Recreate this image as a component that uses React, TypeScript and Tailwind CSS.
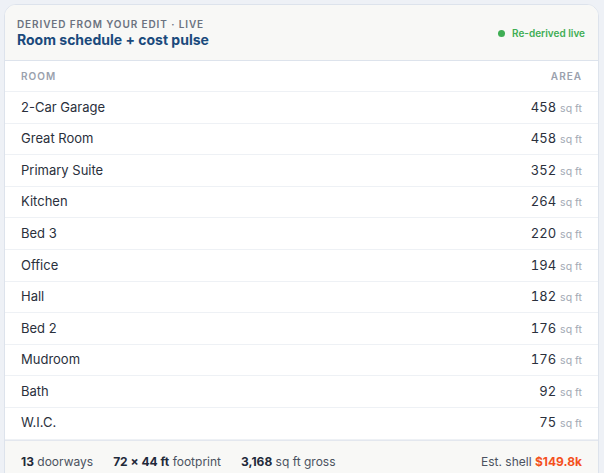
import React from 'react'

interface Room {
  name: string;
  area: number;
}

const rooms: Room[] = [
  { name: "2-Car Garage", area: 458 },
  { name: "Great Room", area: 458 },
  { name: "Primary Suite", area: 352 },
  { name: "Kitchen", area: 264 },
  { name: "Bed 3", area: 220 },
  { name: "Office", area: 194 },
  { name: "Hall", area: 182 },
  { name: "Bed 2", area: 176 },
  { name: "Mudroom", area: 176 },
  { name: "Bath", area: 92 },
  { name: "W.I.C.", area: 75 },
];

const App = () => {
  return (
    <div className="h-[473px] overflow-hidden bg-[#eef1f6] pl-1 pr-[5px] pt-1 font-['Inter',sans-serif]">
      <div className="overflow-hidden rounded-t-xl border border-[#dde3ec] bg-white">
        {/* header */}
        <div className="flex h-[56px] items-center justify-between border-b border-[#dde3ec] bg-[#f8f8f6] px-3">
          <div className="flex flex-col pt-[1px]">
            <span className="text-[10px] font-semibold uppercase leading-[14px] tracking-[0.09em] text-[#6b7280]">
              Derived from your edit · Live
            </span>
            <span className="-mt-[1px] text-[14px] font-bold leading-5 text-[#1a4a7c]">
              Room schedule + cost pulse
            </span>
          </div>
          <div className="mr-[1px] flex items-center gap-[7px] pt-[1px]">
            <span className="h-[7px] w-[7px] rounded-full bg-[#3fae54]" />
            <span className="text-[10px] font-semibold text-[#3fae54]">Re-derived live</span>
          </div>
        </div>

        {/* table */}
        <div className="flex h-[31px] items-center justify-between border-b border-[#eef1f5] px-4 text-[10px] font-semibold uppercase tracking-[0.1em] text-[#9aa1ad]">
          <span>Room</span>
          <span>Area</span>
        </div>
        {rooms.map((room) => (
          <div
            key={room.name}
            className="flex h-[31.6px] items-center justify-between border-b border-[#eef1f5] px-4 last:border-b-0"
          >
            <span className="text-[13px] text-[#2a303c]">{room.name}</span>
            <span className="flex items-baseline gap-[4px]">
              <span className="text-[13px] tabular-nums text-[#2a303c]">{room.area}</span>
              <span className="text-[10.5px] text-[#a3a9b4]">sq ft</span>
            </span>
          </div>
        ))}

        {/* footer */}
        <div className="flex h-[46px] items-start justify-between border-t border-[#e3e7ee] bg-[#f8f8f6] px-4 pt-[13px] text-[12px] leading-4 text-[#4b5260]">
          <div className="flex items-center gap-5">
            <span>
              <b className="font-bold text-[#1f2a3a]">13</b> doorways
            </span>
            <span>
              <b className="font-bold text-[#1f2a3a]">72 × 44 ft</b> footprint
            </span>
            <span>
              <b className="font-bold text-[#1f2a3a]">3,168</b> sq ft gross
            </span>
          </div>
          <span>
            Est. shell <b className="font-bold text-[#f4511e]">$149.8k</b>
          </span>
        </div>
      </div>
    </div>
  );
};

export default App;
